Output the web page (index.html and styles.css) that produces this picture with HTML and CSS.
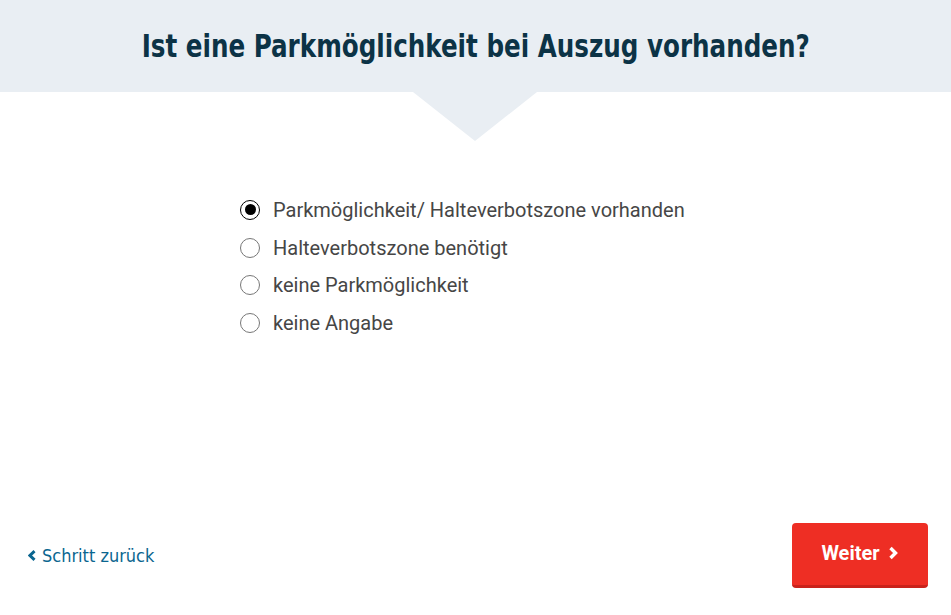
FILE: index.html
```html
<!DOCTYPE html>
<html lang="de">
<head>
<meta charset="utf-8">
<title>Parkmöglichkeit</title>
<link rel="stylesheet" href="styles.css">
</head>
<body>
<div class="page">
  <header class="head">
    <h1 class="title">Ist eine Parkmöglichkeit bei Auszug vorhanden?</h1>
    <div class="notch"></div>
  </header>
  <main class="options">
    <label class="opt"><span class="radio checked"></span><span>Parkmöglichkeit/ Halteverbotszone vorhanden</span></label>
    <label class="opt"><span class="radio"></span><span>Halteverbotszone benötigt</span></label>
    <label class="opt"><span class="radio"></span><span>keine Parkmöglichkeit</span></label>
    <label class="opt"><span class="radio"></span><span>keine Angabe</span></label>
  </main>
  <footer class="foot">
    <a class="back" href="#"><svg class="chev" width="8" height="11" viewBox="0 0 8 11"><path d="M6.5 1.2 L2 5.5 L6.5 9.8" fill="none" stroke="currentColor" stroke-width="3"/></svg>Schritt zurück</a>
    <button class="next">Weiter<svg class="chev" width="11" height="14" viewBox="0 0 11 14"><path d="M2.5 2 L7.5 7 L2.5 12" fill="none" stroke="currentColor" stroke-width="3.4"/></svg></button>
  </footer>
</div>
</body>
</html>
```
FILE: styles.css
```css
html, body { margin: 0; padding: 0; background: #fff; }
.page { width: 951px; height: 615px; display: flex; flex-direction: column; overflow: hidden; }
.head { position: relative; height: 92px; background: #e9eef3; display: flex; align-items: center; justify-content: center; }
.title { margin: 0; font-family: "DejaVu Sans Condensed", sans-serif; font-weight: bold; font-size: 32px; color: #0c3346; transform: scaleX(0.855); white-space: nowrap; }
.notch { position: absolute; left: 413px; top: 92px; width: 0; height: 0; border-left: 62px solid transparent; border-right: 62px solid transparent; border-top: 49px solid #e9eef3; }
.options { display: flex; flex-direction: column; padding: 99px 0 0 240px; font-family: Roboto, sans-serif; font-size: 20px; color: #464646; flex: 1; }
.opt { display: flex; align-items: center; gap: 13px; height: 37.7px; }
.radio { width: 18px; height: 18px; border: 1px solid #777; border-radius: 50%; box-sizing: content-box; position: relative; }
.radio.checked { border-color: #000; }
.radio.checked::after { content: ""; position: absolute; left: 3.5px; top: 3.5px; width: 11px; height: 11px; border-radius: 50%; background: #000; }
.foot { display: flex; justify-content: space-between; align-items: center; padding: 0 23px 27px 28px; }
.back { display: flex; align-items: center; gap: 6px; font-family: "DejaVu Sans Condensed", sans-serif; font-size: 18px; color: #0b6690; text-decoration: none; }
.next { width: 136px; height: 65px; border: 0; border-bottom: 3px solid #c9221b; border-radius: 4px; background: #ee2e24; color: #fff; font-family: Roboto, sans-serif; font-weight: bold; font-size: 20px; display: flex; align-items: center; justify-content: center; gap: 8px; padding: 0 0 3px 0; }
```
